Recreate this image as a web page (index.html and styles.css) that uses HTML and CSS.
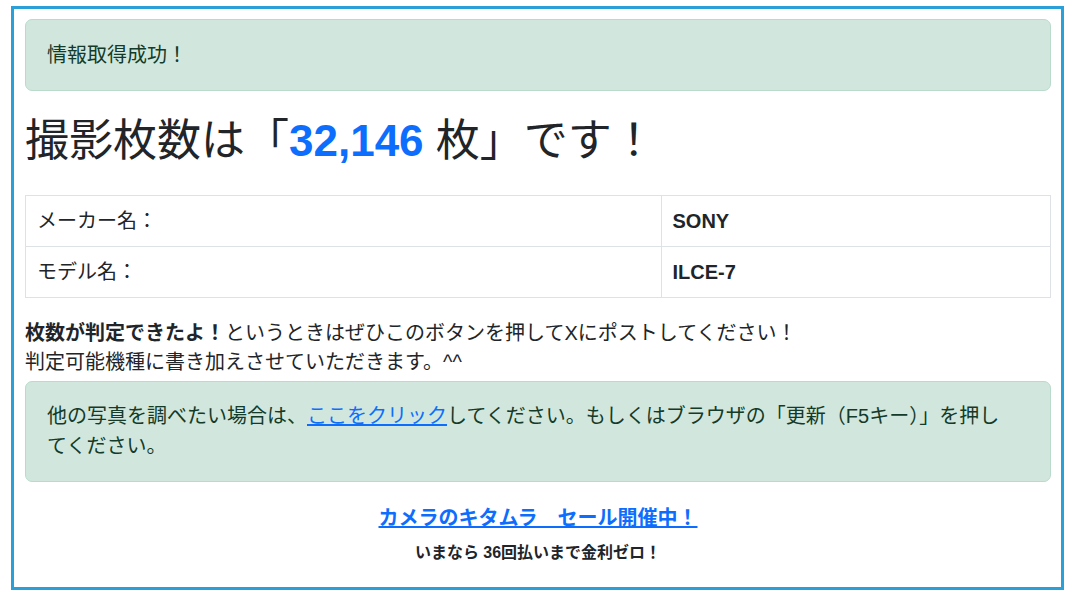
FILE: index.html
```html
<!DOCTYPE html>
<html lang="ja">
<head>
    <meta charset="UTF-8">
    <meta name="viewport" content="width=device-width, initial-scale=1.0">
    <title>撮影枚数チェッカー</title>
    <link rel="stylesheet" href="styles.css">
</head>
<body>
    <div class="frame">
        <div class="alert">情報取得成功！</div>

        <h1 class="result">撮影枚数は「<span class="count">32,146</span> 枚」です！</h1>

        <table class="info-table">
            <tr>
                <td class="label">メーカー名：</td>
                <td class="value">SONY</td>
            </tr>
            <tr>
                <td class="label">モデル名：</td>
                <td class="value">ILCE-7</td>
            </tr>
        </table>

        <p class="note">
            <strong>枚数が判定できたよ！</strong>というときはぜひこのボタンを押してXにポストしてください！<br>
            判定可能機種に書き加えさせていただきます。^^
        </p>

        <div class="alert">
            他の写真を調べたい場合は、<a href="#">ここをクリック</a>してください。もしくはブラウザの「更新（F5キー）」を押してください。
        </div>

        <div class="promo">
            <a href="#" class="promo-link">カメラのキタムラ　セール開催中！</a>
            <p class="promo-sub">いまなら 36回払いまで金利ゼロ！</p>
        </div>
    </div>
</body>
</html>
```

FILE: styles.css
```css
body {
    font-family: "Liberation Sans", "Noto Sans CJK JP", sans-serif;
    font-size: 20px;
    line-height: 1.5;
    color: #212529;
    background-color: #ffffff;
    margin: 0;
    padding: 6px 16px 12px 11px;
}

.frame {
    border: 3px solid #2a9fd8;
    padding: 10px 10px 10px 11px;
    height: 584px;
    box-sizing: border-box;
}

.alert {
    background-color: #d1e7dd;
    border: 1px solid #badbcc;
    border-radius: 7px;
    color: #143a29;
    padding: 20px 21px;
}

.alert + .promo {
    margin-top: 21px;
}

.alert a {
    color: #0d6efd;
}

.result {
    font-size: 44px;
    font-weight: 400;
    line-height: 1.2;
    margin: 24px 0 27px 0;
}

.count {
    color: #0d6efd;
    font-weight: bold;
}

.info-table {
    width: 100%;
    border-collapse: collapse;
}

.info-table td {
    border: 1px solid #dee2e6;
    padding: 10px 11px;
}

.info-table .label {
    width: 62%;
}

.info-table .value {
    font-weight: bold;
}

.note {
    margin: 21px 0 4px 0;
    line-height: 1.45;
}

.note + .alert {
    padding: 19px 36px 20px 21px;
}

.promo {
    text-align: center;
}

.promo-link {
    color: #0d6efd;
    font-size: 20px;
    font-weight: bold;
}

.promo-sub {
    font-size: 16px;
    font-weight: bold;
    margin: 8px 0 0 0;
}
```
